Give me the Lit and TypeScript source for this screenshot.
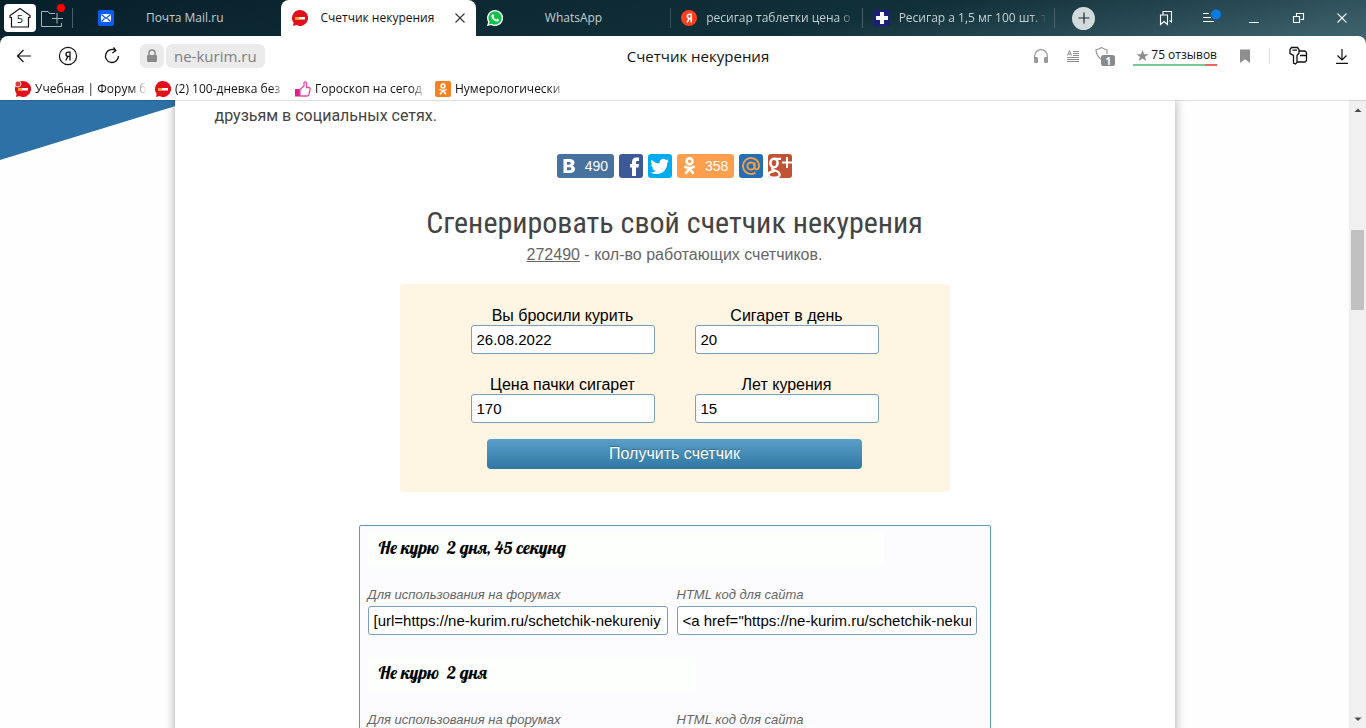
import { LitElement, html, svg, css, nothing, TemplateResult } from "lit";
import { customElement, property } from "lit/decorators.js";
import { classMap } from "lit/directives/class-map.js";

const noSmoke = svg`
  <path d="M8 0a8 8 0 1 1-3.6 15.1L1 16l.6-3.2A8 8 0 0 1 8 0z" fill="#e2101c"/>
  <rect x="3" y="7" width="10" height="2.500" fill="#fff"/>
  <rect x="3" y="7" width="4" height="2.500" fill="#f5a623"/>`;

const art: Record<string, TemplateResult> = {
  mail: svg`<rect width="16" height="16" rx="2" fill="#0a5cf5"/>
    <rect x="3" y="4" width="10" height="8" rx="1" fill="#fff"/>
    <path d="M3.5 4.5 8 8.5l4.500-4M3.500 11.500l3-3M12.500 11.500l-3-3" fill="none" stroke="#0a5cf5" stroke-width="1.300"/>`,
  smoke: noSmoke,
  smokeDot: svg`${noSmoke}<circle cx="3" cy="3" r="3" fill="#e23b3b" stroke="#fff" stroke-width=".8"/>`,
  whatsapp: svg`<path d="M8 0a8 8 0 1 1-3.800 15L0 16l1.100-4A8 8 0 0 1 8 0z" fill="#fff"/>
    <path d="M8 1.300a6.700 6.700 0 1 1-3.500 12.400l-2.700.7.8-2.600A6.700 6.700 0 0 1 8 1.300z" fill="#10c24a"/>
    <path d="M5.400 4.200c.4-.3.9-.2 1 .1l.7 1.500c.1.400-.6.900-.6 1.200.5 1.200 1.500 2 2.600 2.500.4 0 .8-1 1.200-.8l1.500.8c.5.400-.2 1.500-.8 1.800-1.300.6-3.300-.3-4.700-1.600C4.900 8.300 4 6.300 4.500 5.200c.2-.5.500-.8.900-1z" fill="#fff"/>`,
  yandex: svg`<circle cx="8" cy="8" r="8" fill="#fc3f1d"/>
    <path d="M10.200 3.500v9M10.200 4.200H8.600C7 4.200 6.400 5.200 6.400 6.300c0 1.300.8 2.100 2.200 2.100h1.600M8.400 8.400 6 12.500" fill="none" stroke="#fff" stroke-width="1.500"/>`,
  cross: svg`<rect width="16" height="16" fill="#1d1d7c"/><path d="M6 2h4v4h4v4h-4v4H6v-4H2V6h4z" fill="#fff"/>`,
  thumb: svg`<rect y="8" width="5" height="7.500" fill="#e0218a"/>
    <path d="M5 14.500V8.500L9 5V2.200C9 .6 11.500.4 11.500 2.500V6.500h2.300c1.300 0 1.500 1 1.300 2l-1.200 5.200c-.2.800-.8 1.300-1.600 1.300H6z" fill="#fff" stroke="#e64aa0" stroke-width="1.300"/>`,
  ok: svg`<rect width="16" height="16" rx="2" fill="#f58220"/>
    <circle cx="8" cy="5" r="1.900" fill="none" stroke="#fff" stroke-width="1.500"/>
    <path d="M5 8.600c1.800 1.200 4.200 1.200 6 0M8 9.500 5.500 12.800M8 9.500l2.500 3.300" fill="none" stroke="#fff" stroke-width="1.600" stroke-linecap="round"/>`,
  home: svg`<path d="M12 2.500 22 9.500v2h-1.500V21h-17v-9.500H2v-2z" fill="none" stroke="#111" stroke-width="1.200"/>`,
  folder: svg`<path d="M14 7.500H8.500L7 5.500H.5V20.500H20.500V17M16 7v10.500M11 12.500h11" fill="none" stroke="#aab6ba" stroke-width="1"/>`,
  plus: svg`<path d="M8 2.500v11M2.500 8h11" stroke="#1b2a30" stroke-width="1.200"/>`,
  close: svg`<path d="M3.500 3.500l9 9M12.500 3.500l-9 9" stroke="currentColor" stroke-width="1.100"/>`,
  marks: svg`<path d="M5 4.500V1.500h8.500V12l-2-1.500M2.500 5H9.500V14.500L6 11.500 2.500 14.500z" fill="none" stroke="#fff" stroke-width="1.100"/>`,
  menu: svg`<path d="M1 3.500h6M1 7.500h8M1 11.500h11" stroke="#fff" stroke-width="1.100"/><circle cx="14" cy="4.500" r="5" fill="#087be0"/>`,
  minimize: svg`<path d="M3 12.500h10" stroke="#fff"/>`,
  restore: svg`<path d="M6.500 6.500V3.500h7v6h-3M3.500 6.500h6v6h-6z" fill="none" stroke="#fff" stroke-width="1.100"/>`,
  back: svg`<path d="M15 8H1.500M7.500 2 1.500 8l6 6" fill="none" stroke="#111" stroke-width="1.200"/>`,
  ya: svg`<circle cx="10" cy="10" r="8.600" fill="none" stroke="#111" stroke-width="1.200"/>
    <path d="M12 5.500v9M12 6.100h-1.800C8.700 6.100 8 7 8 8.200c0 1.300.9 2.200 2.300 2.200H12M10 10.400 7.700 14.500" fill="none" stroke="#111" stroke-width="1.300"/>`,
  reload: svg`<path d="M16.500 10a6.500 6.500 0 1 1-3.200-5.600M11.500 1.500l2.300 3.200-3.500 2.300" fill="none" stroke="#111" stroke-width="1.300"/>`,
  lock: svg`<rect x="3" y="7" width="10" height="7" rx="1" fill="#8a8a8a"/><path d="M5 7V5a3 3 0 0 1 6 0v2" fill="none" stroke="#8a8a8a" stroke-width="1.500"/>`,
  headphones: svg`<path d="M1.700 12V8a6.300 6.300 0 0 1 12.600 0v4" fill="none" stroke="#999" stroke-width="1.300"/><rect x="1" y="9" width="4" height="6" rx="1" fill="#999"/><rect x="11" y="9" width="4" height="6" rx="1" fill="#999"/>`,
  reader: svg`<path d="M2.500 7.500 4.500 2.500 6.500 7.500M3 6h3M8 3.500h6M8 5.500h6M8 7.500h6M2 9.500h12M2 11.500h12M2 13.500h12" fill="none" stroke="#8c8c8c" stroke-width="1"/>`,
  shield: svg`<path d="M7 14C3.500 11.500 1 8.500 1 3.500c2.500 0 3.500-1 5.500-2 2 1 3 2 5.500 2V8" fill="none" stroke="#999" stroke-width="1.200"/>
    <rect x="6" y="9" width="14" height="11" rx="2.500" fill="#8a8a8a"/>`,
  star: svg`<path d="M6.500 1l1.600 4.200h4.400L9 7.800l1.300 4.200-3.800-2.500L2.700 12 4 7.800.5 5.200h4.400z" fill="#8c8c8c"/>`,
  flag: svg`<path d="M3 1.500h10V15l-5-3.800L3 15z" fill="#8e8e8e"/>`,
  key: svg`<path d="M3.500 1.500h6l1.500 2v3.500L9 9.500v7L7.500 18l-2-1V9.500L2 7.500v-4zM4.500 4.200h4.500M11.500 5h5.500l1.500 1.500v8L17 16H9.500M12 9.500h6.500" fill="none" stroke="#111" stroke-width="1.300"/>`,
  download: svg`<path d="M8 1v11M3.500 7.500 8 12l4.500-4.500M2 15.300h12" fill="none" stroke="#111" stroke-width="1.200"/>`,
  up: svg`<path d="M4.500 11 8 7.500 11.500 11z" fill="#4a4a4a"/>`,
  down: svg`<path d="M4.500 5.500 8 9l3.500-3.500z" fill="#4a4a4a"/>`,
  vk: svg`<path fill-rule="evenodd" d="M6.500 5h6c3.200 0 5 1.300 5 3.700 0 1.500-.8 2.500-2 3 1.600.4 2.500 1.600 2.500 3.400 0 2.700-2 3.900-5.200 3.900H6.500zM10 8v2.700h1.700c1.300 0 2-.4 2-1.400S13 8 11.700 8zM10 13.300v2.900h2c1.400 0 2.200-.4 2.200-1.500s-.8-1.400-2.200-1.400z" fill="#fff"/>`,
  fb: svg`<path d="M13 22v-8.500h-2V10h2V8c0-3 1.500-4.500 4.500-4.500H20V7h-1.500C17.300 7 17 7.500 17 8.500V10h3l-.5 3.500H17V22z" fill="#fff"/>`,
  tw: svg`<path d="M21 6.700c-.7.300-1.400.5-2.100.6.800-.5 1.300-1.200 1.600-2.100-.7.400-1.500.7-2.400.9A3.900 3.900 0 0 0 11.500 9.600C8.300 9.500 5.500 8 3.700 5.700c-1 1.700-.5 3.900 1.100 5-.6 0-1.200-.2-1.700-.5 0 1.900 1.300 3.500 3 3.900-.6.100-1.200.1-1.700 0 .5 1.500 1.900 2.600 3.500 2.700A7.600 7.600 0 0 1 3 18.400c1.600 1 3.600 1.600 5.700 1.600 7 0 10.700-5.900 10.500-11.300.7-.6 1.300-1.200 1.800-2z" fill="#fff"/>`,
  odn: svg`<circle cx="12.500" cy="7.300" r="3" fill="none" stroke="#fff" stroke-width="2.500"/>
    <path d="M8.300 12.900c2.500 1.500 5.900 1.500 8.400 0M12.500 14.500 9 19M12.500 14.500l3.500 4.500" fill="none" stroke="#fff" stroke-width="2.600" stroke-linecap="round"/>`,
  at: svg`<circle cx="12" cy="12" r="3.600" fill="none" stroke="#f89c3c" stroke-width="2"/>
    <path d="M15.600 8.500v5c0 3 4.400 2.600 4.400-1.500a8 8 0 1 0-3.500 6.600" fill="none" stroke="#f89c3c" stroke-width="1.900"/>`,
  gplus: svg`<ellipse cx="6" cy="9" rx="3.600" ry="4.200" fill="none" stroke="#fff" stroke-width="2.600"/>
    <path d="M6 4.800h7M5.500 13c-2.500 1.500-1 2.700 1.500 3.500 4 1.200 5 2.500 4.500 5-1 3-10 3-11-.5 0-2 2-3.500 6-4" fill="none" stroke="#fff" stroke-width="2.300"/>
    <path d="M19 3v11M14 8.500h10" stroke="#fff" stroke-width="2"/>`,
};

const icon = (name: string, size = 16, box = size) => html`<svg
  width=${size} height=${size} viewBox="0 0 ${box} ${box}" aria-hidden="true">${art[name]}</svg>`;

const base = css`
  * { box-sizing: border-box; }
  svg { display: block; flex: none; }
  button { border: 0; background: none; padding: 0; margin: 0; font: inherit; color: inherit; display: flex; align-items: center; justify-content: center; }
  a { color: inherit; text-decoration: none; }
`;

@customElement("browser-header")
class BrowserHeader extends LitElement {
  static styles = [base, css`
    :host { display: block; font: 12px/18px "Open Sans", "Noto Sans", sans-serif; background: linear-gradient(170deg, #06202b, #12303a 50%, #456a75 85%); box-shadow: 0 1px 0 rgba(0, 0, 0, .13); position: relative; z-index: 1; }
    .strip { height: 36px; display: flex; }
    .start { display: flex; align-items: flex-start; width: 87px; flex: none; padding: 4px 0 0 4px; gap: 5px; }
    .count { width: 32px; height: 28px; background: #fff; border-radius: 4px; display: grid; place-items: center; }
    .count > * { grid-area: 1 / 1; }
    .count span { font-size: 11px; padding-top: 2px; color: #111; }
    .groups { height: 28px; position: relative; }
    .groups::after { content: ""; position: absolute; right: 0; top: 0; width: 8px; height: 8px; border-radius: 50%; background: #f00; }
    .rule { width: 1px; height: 20px; background: #4a6068; margin: 4px 2px 0; }
    .tabs { flex: 1; display: flex; min-width: 0; }
    .tab { flex: 1 1 0; min-width: 0; display: flex; align-items: center; gap: 12px; padding: 0 10px 0 11px; color: #c4cfd2; position: relative; }
    .tab .name { flex: 1; overflow: hidden; white-space: nowrap; }
    .tab.short .name { text-align: center; padding-right: 28px; }
    .tab.long { gap: 9px; padding-right: 8px; }
    .tab.long .name, .mark .name { mask-image: linear-gradient(to right, #000 calc(100% - 16px), transparent); }
    .tab.long::after { content: ""; position: absolute; right: 0; top: 8px; height: 20px; width: 1px; background: #47606a; }
    .tab.lined::before { content: ""; position: absolute; left: 0; top: 8px; height: 20px; width: 1px; background: #38525b; }
    .tab.active { background: #fff; color: #111; border-radius: 8px 8px 0 0; }
    .tab.active button { width: 12px; color: #333; }
    .end { width: 311px; flex: none; display: flex; align-items: center; padding: 0 2px 0 17px; color: #fff; }
    .add { width: 23px; height: 23px; border-radius: 50%; background: #d3dadc; margin-right: auto; }
    .win { width: 44px; height: 36px; }
    .win svg { overflow: visible; }
    .white { background: #fff; border-radius: 8px 8px 0 0; }
    .bar { height: 40px; display: grid; grid-template-columns: 1fr auto 1fr; align-items: center; }
    .nav { display: flex; align-items: center; padding-left: 2px; }
    .nav > button { width: 44px; height: 40px; }
    .addr { display: flex; gap: 2px; padding-left: 6px; }
    .addr > * { height: 24px; background: #ebebeb; border-radius: 6px; color: #808080; }
    .secure { width: 24px; }
    .host { font-size: 15px; line-height: 24px; padding: 0 8px; }
    .title { font-size: 15px; padding-left: 30px; color: #111; }
    .tools { display: flex; align-items: center; justify-content: flex-end; }
    .t { width: 32px; height: 40px; }
    .wide { width: 40px; }
    .last { width: 48px; }
    .shield { display: grid; place-items: center; }
    .shield > * { grid-area: 1 / 1; }
    .shield span { font: bold 10px/12px "Open Sans", sans-serif; color: #fff; padding: 9px 0 0 6px; }
    .reviews { margin: 0 12px; color: #111; }
    .reviews .line { display: flex; align-items: center; gap: 2px; padding-left: 3px; }
    .meter { height: 2px; background: linear-gradient(to right, #79c793 86%, #f0655a 86%); }
    .sep { width: 1px; height: 16px; background: #ddd; margin: 0 8px; }
    .marks { height: 24px; display: flex; align-items: center; gap: 8px; padding: 1px 0 0 15px; color: #111; }
    .mark { display: flex; align-items: center; gap: 4px; width: 132px; }
    .mark .name { flex: 1; overflow: hidden; white-space: nowrap; }
  `];

  private tabs = [
    { icon: "mail", name: "Почта Mail.ru", kind: "short" },
    { icon: "smoke", name: "Счетчик некурения", kind: "active" },
    { icon: "whatsapp", name: "WhatsApp", kind: "short" },
    { icon: "yandex", name: "ресигар таблетки цена о", kind: "long" },
    { icon: "cross", name: "Ресигар а 1,5 мг 100 шт. т", kind: "long" },
  ];
  private marks = [
    ["smokeDot", "Учебная | Форум б"],
    ["smoke", "(2) 100-дневка без"],
    ["thumb", "Гороскоп на сегод"],
    ["ok", "Нумерологически"],
  ];

  render() {
    return html`
      <div class="strip">
        <div class="start">
          <button class="count" aria-label="Вкладки">${icon("home", 24)}<span>5</span></button>
          <button class="groups" aria-label="Группы">${icon("folder", 24)}</button>
          <div class="rule"></div>
        </div>
        <div class="tabs">
          ${this.tabs.map((t, i) => html`<div class=${classMap({ tab: true, [t.kind]: true, lined: i === 3 })}>
            ${icon(t.icon)}<span class="name">${t.name}</span>
            ${t.kind === "active" ? html`<button aria-label="Закрыть вкладку">${icon("close")}</button>` : nothing}
          </div>`)}
        </div>
        <div class="end">
          <button class="add" aria-label="Новая вкладка">${icon("plus")}</button>
          ${["marks", "menu", "minimize", "restore", "close"].map((n) => html`<button class="win" aria-label=${n}>${icon(n)}</button>`)}
        </div>
      </div>
      <div class="white">
        <div class="bar">
          <div class="nav">
            <button aria-label="Назад">${icon("back", 16)}</button>
            <button aria-label="Яндекс">${icon("ya", 20)}</button>
            <button aria-label="Обновить">${icon("reload", 20)}</button>
            <div class="addr">
              <button class="secure" aria-label="Защищено">${icon("lock")}</button>
              <a class="host" href="#">ne-kurim.ru</a>
            </div>
          </div>
          <div class="title">Счетчик некурения</div>
          <div class="tools">
            <button class="t" aria-label="Слушать">${icon("headphones")}</button>
            <button class="t" aria-label="Режим чтения">${icon("reader")}</button>
            <button class="t shield" aria-label="Защита">${icon("shield", 20)}<span>1</span></button>
            <a class="reviews" href="#"><span class="line">${icon("star", 13)}75 отзывов</span><div class="meter"></div></a>
            <button class="t" aria-label="Закладка">${icon("flag")}</button>
            <div class="sep"></div>
            <button class="t wide" aria-label="Пароли">${icon("key", 20)}</button>
            <button class="t last" aria-label="Загрузки">${icon("download")}</button>
          </div>
        </div>
        <nav class="marks">
          ${this.marks.map(([i, n]) => html`<a class="mark" href="#">${icon(i)}<span class="name">${n}</span></a>`)}
        </nav>
      </div>`;
  }
}

@customElement("counter-result")
class CounterResult extends LitElement {
  @property() text = "";
  @property({ type: Boolean }) brief = false;
  static styles = [base, css`
    :host { display: block; height: 125px; }
    .banner { width: 516px; max-width: 100%; height: 34px; background: #fdfffc; padding-left: 11px; font: 18px/32px Lobster, "Liberation Serif", serif; color: #000; white-space: pre; }
    .banner.brief { width: 328px; }
    .codes { display: grid; grid-template-columns: 300px 300px; gap: 9px; padding-top: 18px; }
    label { display: block; font: italic 13px/22px "Liberation Sans", sans-serif; color: #666; }
    input { display: block; width: 100%; height: 29px; border: 1px solid #7f9db9; border-radius: 3px; padding: 0 5px; background: #fff; font: 15px "Liberation Sans", sans-serif; color: #000; }
  `];
  render() {
    return html`
      <div class=${classMap({ banner: true, brief: this.brief })}>${this.text}</div>
      <div class="codes">
        <div><label for="bb">Для использования на форумах</label>
          <input id="bb" readonly .value=${"[url=https://ne-kurim.ru/schetchik-nekureniy"}></div>
        <div><label for="code">HTML код для сайта</label>
          <input id="code" readonly .value=${'<a href="https://ne-kurim.ru/schetchik-nekureniya/">'}></div>
      </div>`;
  }
}

@customElement("app-root")
class AppRoot extends LitElement {
  static styles = [base, css`
    :host { display: flex; flex-direction: column; height: 100vh; overflow: hidden; background: #fff; font: 16px/20px "Liberation Sans", sans-serif; }
    .view { flex: 1; min-height: 0; display: flex; }
    .page { flex: 1; min-width: 0; overflow: hidden; position: relative; display: flex; justify-content: center; background: #fefefe; }
    .wedge { position: absolute; left: 0; top: 0; width: 195px; height: 60px; background: #2e71a6; clip-path: polygon(0 0, 100% 0, 0 100%); }
    .paper { position: relative; width: 100%; max-width: 1000px; min-height: 100%; height: max-content; background: #fff; box-shadow: 0 0 10px rgba(0, 0, 0, .35); display: flex; flex-direction: column; align-items: center; }
    .lead { align-self: stretch; margin: 0; padding: 4px 40px 0; font: 16px/24px Roboto, sans-serif; color: #444; }
    .share { display: flex; gap: 5px; padding-top: 26px; }
    .share a { display: flex; align-items: center; height: 24px; border-radius: 3px; color: #fff; font-size: 14px; overflow: hidden; }
    .share .num { padding: 0 6px 0 4px; }
    .vk { background: #48729e; } .fb { background: #3c5a98; } .tw { background: #00aced; }
    .odn { background: #ff9f4d; } .at { background: #226eb7; } .gplus { background: #c25234; }
    h2 { margin: 25px 0 0; font: 400 30px/40px "Roboto Condensed", "Liberation Sans Narrow", Roboto, sans-serif; color: #444; }
    .total { margin: 2px 0 0; color: #666; }
    .total a { text-decoration: underline; }
    form { width: 550px; max-width: 100%; margin-top: 19px; padding: 21px 0 23px; background: #fff5e3; border-radius: 4px; display: flex; flex-direction: column; align-items: center; }
    .fields { display: grid; grid-template-columns: 184px 184px; gap: 20px 40px; }
    .fields label { display: block; text-align: center; padding-top: 2px; line-height: 18px; color: #000; }
    .fields input { display: block; width: 100%; height: 29px; border: 1px solid #7f9db9; border-radius: 3px; padding: 0 5px; background: #fff; font: 15px "Liberation Sans", sans-serif; color: #000; }
    .submit { width: 375px; height: 30px; margin-top: 16px; border-radius: 4px; color: #fff; background: linear-gradient(#5a9fc9, #2f78a3); text-shadow: 0 -1px 1px rgba(0, 0, 0, .3); }
    .results { width: 632px; max-width: 100%; margin-top: 33px; padding: 6px 8px; border: 1px solid #5b9bb8; border-radius: 2px; background: #fcfcff; }
    .scroll { width: 17px; background: #f0f0f0; display: flex; flex-direction: column; align-items: center; justify-content: space-between; position: relative; }
    .scroll button { height: 17px; width: 17px; }
    .thumb { position: absolute; top: 130px; left: 2px; width: 13px; height: 80px; background: #c1c1c1; }
  `];

  private fields = [
    ["date", "Вы бросили курить", "26.08.2022"],
    ["daily", "Сигарет в день", "20"],
    ["price", "Цена пачки сигарет", "170"],
    ["years", "Лет курения", "15"],
  ];
  private share = [
    ["vk", "ВКонтакте", "490"], ["fb", "Facebook", ""], ["tw", "Twitter", ""],
    ["odn", "Одноклассники", "358"], ["at", "Мой мир", ""], ["gplus", "Google+", ""],
  ];

  render() {
    return html`
      <browser-header></browser-header>
      <div class="view">
        <div class="page">
          <div class="wedge"></div>
          <main class="paper">
            <p class="lead">друзьям в социальных сетях.</p>
            <div class="share">
              ${this.share.map(([id, label, n]) => html`<a class=${id} href="#" aria-label=${label}>${icon(id, 24)}${n ? html`<span class="num">${n}</span>` : nothing}</a>`)}
            </div>
            <h2>Сгенерировать свой счетчик некурения</h2>
            <p class="total"><a href="#">272490</a> - кол-во работающих счетчиков.</p>
            <form @submit=${(e: Event) => e.preventDefault()}>
              <div class="fields">
                ${this.fields.map(([id, label, value]) => html`<div>
                  <label for=${id}>${label}</label><input id=${id} type="text" .value=${value}>
                </div>`)}
              </div>
              <button class="submit">Получить счетчик</button>
            </form>
            <section class="results">
              <counter-result text="Не курю  2 дня, 45 секунд"></counter-result>
              <counter-result text="Не курю  2 дня" brief></counter-result>
            </section>
          </main>
        </div>
        <div class="scroll">
          <button aria-label="Вверх">${icon("up")}</button>
          <div class="thumb"></div>
          <button aria-label="Вниз">${icon("down")}</button>
        </div>
      </div>`;
  }
}
